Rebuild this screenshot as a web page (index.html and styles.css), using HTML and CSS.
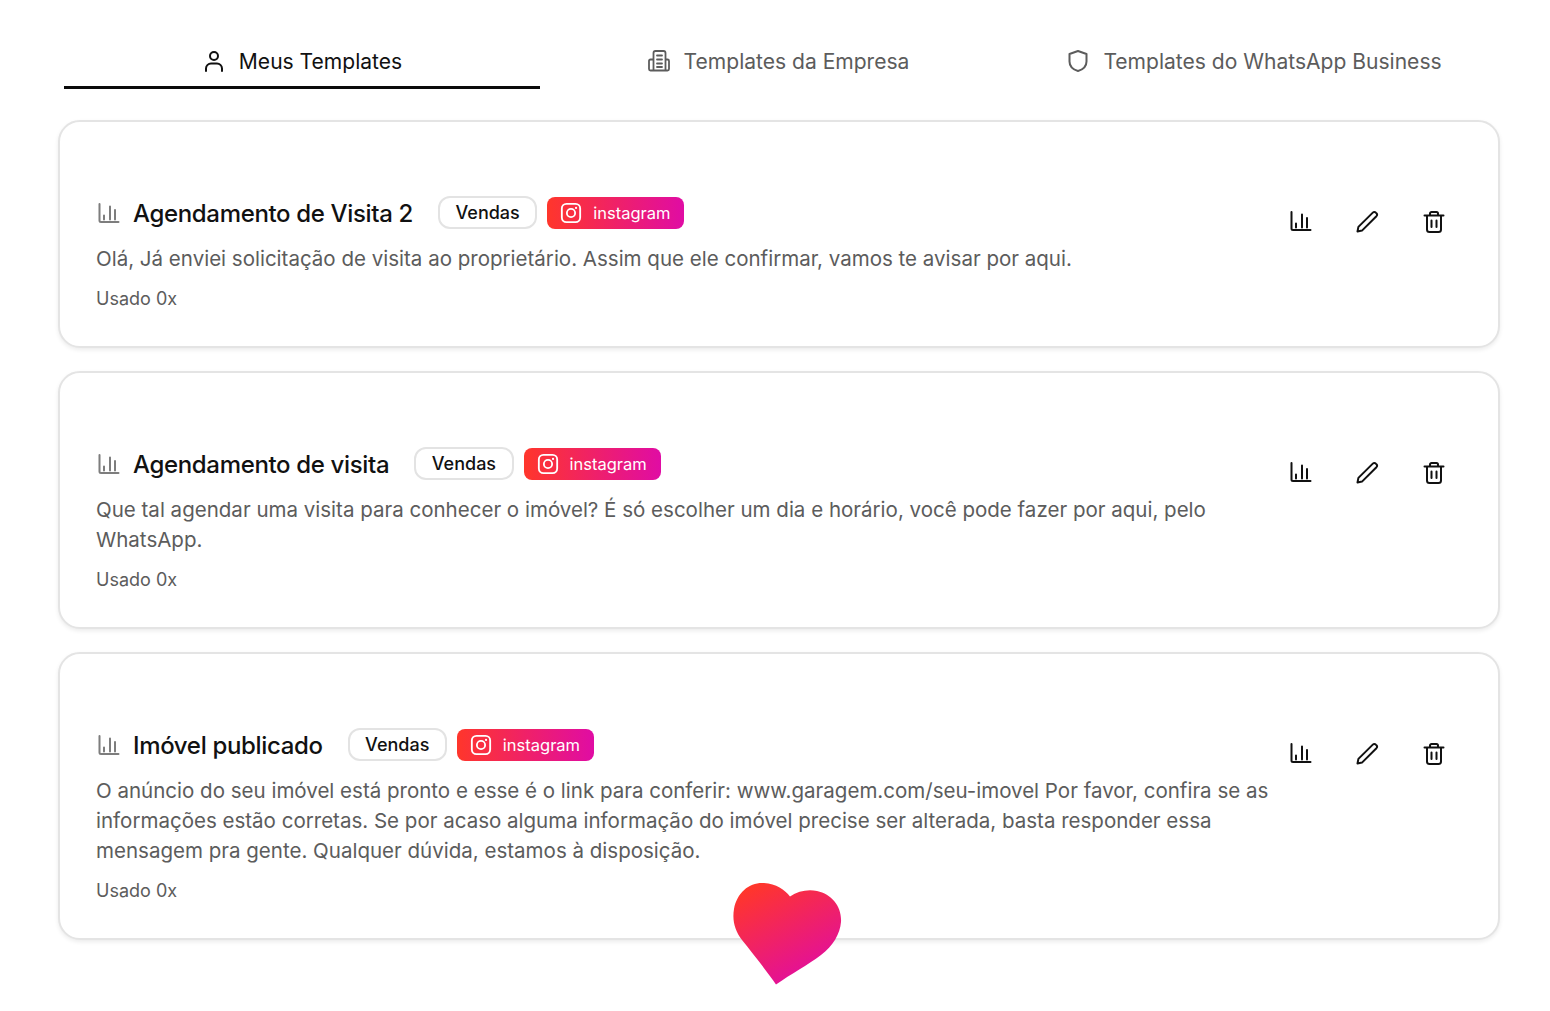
FILE: index.html
```html
<!DOCTYPE html>
<html lang="en">
<head>
    <meta charset="UTF-8">
    <meta name="viewport" content="width=device-width, initial-scale=1.0">
    <title>Templates</title>
    <link rel="stylesheet" href="styles.css">
</head>
<body>
    <svg class="defs" width="0" height="0">
        <defs>
            <linearGradient id="heart-gradient" x1="0.15" y1="0.05" x2="0.7" y2="1">
                <stop offset="0" stop-color="#ff362b"/>
                <stop offset="1" stop-color="#e00ca4"/>
            </linearGradient>
            <symbol id="icon-chart" viewBox="0 0 24 24">
                <path d="M3.5 2v16.5c0 1 .5 1.500 1.500 1.500h17.500M8 13.500V17.500M14 4.500V17.500M19 8V17.500" fill="none" stroke="currentColor" stroke-width="2" stroke-linecap="round" stroke-linejoin="round"/>
            </symbol>
            <symbol id="icon-pencil" viewBox="0 0 24 24">
                <path d="M2.5 21.5l.9-4.6L17.8 2.6c.9-.9 2.2-.9 3 0l.6.6c.8.8.8 2.1 0 3L7 20.6z" fill="none" stroke="currentColor" stroke-width="2" stroke-linejoin="round"/>
            </symbol>
            <symbol id="icon-trash" viewBox="0 0 24 24">
                <path d="M2.5 5.5h19M8 5.5V3.500C8 2.700 8.700 2 9.500 2h5c.8 0 1.500.7 1.500 1.500v2M5 5.500v14c0 1.400 1.100 2.500 2.500 2.500h9c1.400 0 2.500-1.100 2.500-2.500v-14M9.500 10.500v6.500M14.500 10.500v6.500" fill="none" stroke="currentColor" stroke-width="2" stroke-linecap="round" stroke-linejoin="round"/>
            </symbol>
            <symbol id="icon-instagram" viewBox="0 0 24 24">
                <rect x="2" y="2" width="20" height="20" rx="5" fill="none" stroke="currentColor" stroke-width="2"/>
                <circle cx="12" cy="12" r="4.500" fill="none" stroke="currentColor" stroke-width="2"/>
                <circle cx="17.500" cy="6.500" r="1.200" fill="currentColor"/>
            </symbol>
        </defs>
    </svg>

    <main class="page">
        <nav class="tabs">
            <div class="tab active">
                <svg class="tab-icon" viewBox="0 0 24 24"><circle cx="12" cy="7" r="4" fill="none" stroke="currentColor" stroke-width="2"/><path d="M4 22v-2.500C4 16.500 6.500 14.500 9 14.500h6c2.500 0 5 2 5 5V22" fill="none" stroke="currentColor" stroke-width="2" stroke-linecap="round"/></svg>
                <span>Meus Templates</span>
            </div>
            <div class="tab">
                <svg class="tab-icon" viewBox="0 0 24 24"><path d="M6.500 21.500V4c0-1.200.8-2 2-2h8c1.200 0 2 .8 2 2v17.500M6.500 10.500H3.500c-1 0-1.500.6-1.500 1.500v8c0 1 .6 1.500 1.500 1.500h17c1 0 1.500-.6 1.500-1.500v-8c0-1-.6-1.500-1.500-1.500h-2M10 6.500h5M10 10.500h5M10 14.500h5M10 18h5" fill="none" stroke="currentColor" stroke-width="1.800" stroke-linecap="round" stroke-linejoin="round"/></svg>
                <span>Templates da Empresa</span>
            </div>
            <div class="tab">
                <svg class="tab-icon" viewBox="0 0 24 24"><path d="M12 2l8.500 3v7.500c0 5-3.500 8-8.500 9.500-5-1.500-8.500-4.500-8.500-9.500V5z" fill="none" stroke="currentColor" stroke-width="2" stroke-linejoin="round"/></svg>
                <span>Templates do WhatsApp Business</span>
            </div>
        </nav>

        <section class="card">
            <div class="card-body">
                <div class="card-title">
                    <svg class="title-icon"><use href="#icon-chart"/></svg>
                    <h2>Agendamento de Visita 2</h2>
                    <span class="tag">Vendas</span>
                    <span class="channel"><svg class="channel-icon"><use href="#icon-instagram"/></svg>instagram</span>
                </div>
                <p class="card-text">Olá, Já enviei solicitação de visita ao proprietário. Assim que ele confirmar, vamos te avisar por aqui.</p>
                <p class="card-usage">Usado 0x</p>
            </div>
            <div class="card-actions">
                <svg class="action"><use href="#icon-chart"/></svg>
                <svg class="action"><use href="#icon-pencil"/></svg>
                <svg class="action"><use href="#icon-trash"/></svg>
            </div>
        </section>

        <section class="card">
            <div class="card-body">
                <div class="card-title">
                    <svg class="title-icon"><use href="#icon-chart"/></svg>
                    <h2>Agendamento de visita</h2>
                    <span class="tag">Vendas</span>
                    <span class="channel"><svg class="channel-icon"><use href="#icon-instagram"/></svg>instagram</span>
                </div>
                <p class="card-text">Que tal agendar uma visita para conhecer o imóvel? É só escolher um dia e horário, você pode fazer por aqui, pelo WhatsApp.</p>
                <p class="card-usage">Usado 0x</p>
            </div>
            <div class="card-actions">
                <svg class="action"><use href="#icon-chart"/></svg>
                <svg class="action"><use href="#icon-pencil"/></svg>
                <svg class="action"><use href="#icon-trash"/></svg>
            </div>
        </section>

        <section class="card">
            <div class="card-body">
                <div class="card-title">
                    <svg class="title-icon"><use href="#icon-chart"/></svg>
                    <h2>Imóvel publicado</h2>
                    <span class="tag">Vendas</span>
                    <span class="channel"><svg class="channel-icon"><use href="#icon-instagram"/></svg>instagram</span>
                </div>
                <p class="card-text">O anúncio do seu imóvel está pronto e esse é o link para conferir: www.garagem.com/seu-imovel Por favor, confira se as informações estão corretas. Se por acaso alguma informação do imóvel precise ser alterada, basta responder essa mensagem pra gente. Qualquer dúvida, estamos à disposição.</p>
                <p class="card-usage">Usado 0x</p>
            </div>
            <div class="card-actions">
                <svg class="action"><use href="#icon-chart"/></svg>
                <svg class="action"><use href="#icon-pencil"/></svg>
                <svg class="action"><use href="#icon-trash"/></svg>
            </div>
        </section>

        <svg class="heart" viewBox="0 0 110 105">
            <path d="M43 103.500C36 93 21 74 9 59 2 50 -1 40 1 28 4 11 17 1 31 2 43 2.500 52 9 57 15.500 65 10 75 8 84 10 99 13 109 26 108 41 107 53 100 65 88 74 75 84 58 93 43 103.500Z" fill="url(#heart-gradient)"/>
        </svg>
    </main>
</body>
</html>
```

FILE: styles.css
```css
* {
    box-sizing: border-box;
}
body {
    margin: 0;
    background-color: #fff;
    font-family: Inter, "Noto Sans", sans-serif;
    color: #5c5c5c;
}
.defs {
    display: block;
    height: 0;
}
.page {
    position: relative;
    width: 1550px;
    min-height: 1011px;
    padding: 33px 50px 0 58px;
}
.tabs {
    display: flex;
    padding: 0 8px 0 6px;
    margin-bottom: 31px;
}
.tab {
    flex: 1;
    height: 56px;
    padding-top: 3px;
    display: flex;
    justify-content: center;
    align-items: center;
    gap: 13px;
    font-size: 21.05px;
    border-bottom: 3px solid transparent;
}
.tab.active {
    color: #111;
    border-bottom-color: #0a0a0a;
}
.tab-icon {
    width: 24px;
    height: 24px;
}
.card {
    display: flex;
    justify-content: space-between;
    background: #fff;
    border: 2px solid #e4e4e4;
    border-radius: 22px;
    box-shadow: 0 2px 4px rgba(0, 0, 0, 0.08);
    padding: 75px 36px 35px;
    margin-bottom: 23px;
}
.card-body {
    width: 1175px;
}
.card-title {
    display: flex;
    align-items: center;
    height: 33px;
}
.title-icon {
    width: 24px;
    height: 24px;
    margin-right: 13px;
    color: #7d7d7d;
}
.card-title h2 {
    margin: 0 25px 0 0;
    font-size: 24px;
    font-weight: 500;
    letter-spacing: -0.34px;
    color: #111;
}
.tag {
    height: 33px;
    padding: 0 15.5px;
    margin: 0 10px 2px 0;
    display: flex;
    align-items: center;
    border: 2px solid #e3e3e3;
    border-radius: 12px;
    font-size: 18px;
    font-weight: 500;
    color: #111;
}
.channel {
    height: 32px;
    width: 137px;
    padding-left: 13px;
    margin-bottom: 2px;
    display: flex;
    align-items: center;
    gap: 11px;
    border-radius: 8px;
    background: linear-gradient(90deg, #ff362b, #e00ca4);
    color: #fff;
    font-size: 16.5px;
}
.channel-icon {
    width: 22px;
    height: 22px;
}
.card-text {
    margin: 14px 0 0;
    font-size: 20.52px;
    line-height: 30px;
}
.card-usage {
    margin: 13px 0 0;
    font-size: 18px;
    line-height: 24px;
}
.card-actions {
    display: flex;
    gap: 43px;
    padding: 13px 16px 0 0;
    color: #111;
}
.action {
    width: 24px;
    height: 24px;
}
.heart {
    position: absolute;
    left: 733px;
    top: 881px;
    width: 110px;
    height: 105px;
}
```
